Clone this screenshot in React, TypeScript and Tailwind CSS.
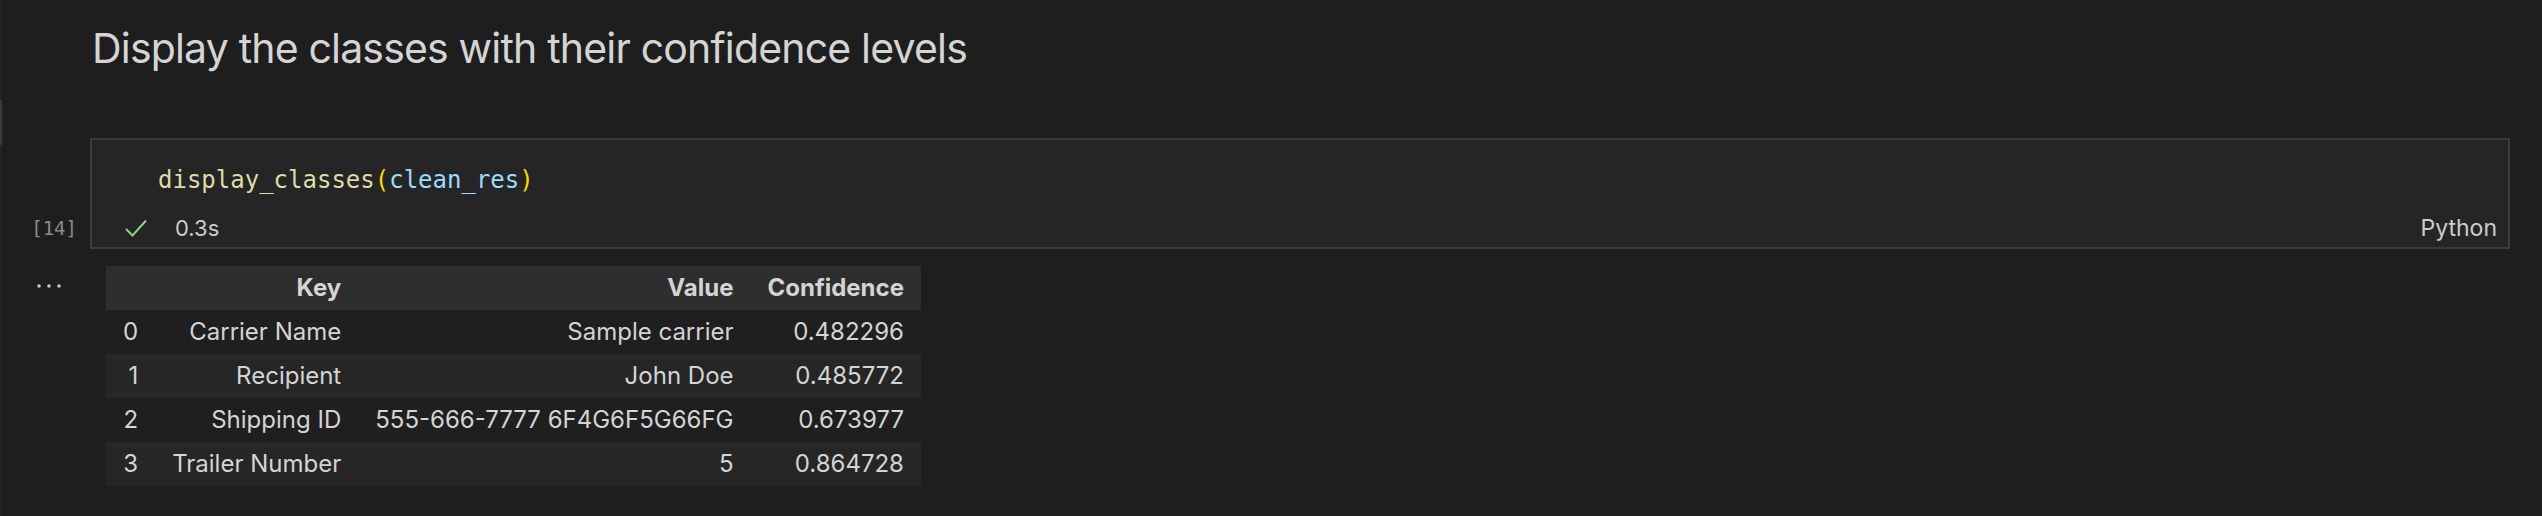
import React from 'react';

interface Row {
  idx: number;
  key: string;
  value: string;
  confidence: string;
}

const rows: Row[] = [
  { idx: 0, key: 'Carrier Name', value: 'Sample carrier', confidence: '0.482296' },
  { idx: 1, key: 'Recipient', value: 'John Doe', confidence: '0.485772' },
  { idx: 2, key: 'Shipping ID', value: '555-666-7777 6F4G6F5G66FG', confidence: '0.673977' },
  { idx: 3, key: 'Trailer Number', value: '5', confidence: '0.864728' },
];

const sans = "font-['Inter','Noto_Sans',sans-serif]";
const mono = "font-['DejaVu_Sans_Mono','Liberation_Mono',monospace]";

function CheckIcon() {
  return (
    <svg width="22" height="18" viewBox="0 0 22 18" fill="none">
      <polyline points="1,10 7.5,16.5 21,1.5" stroke="#89d185" strokeWidth="2" strokeLinejoin="miter" />
    </svg>
  );
}

function MoreIcon() {
  return (
    <svg width="26" height="6" viewBox="0 0 26 6">
      <circle cx="3" cy="3" r="1.8" fill="#c5c5c5" />
      <circle cx="13" cy="3" r="1.8" fill="#c5c5c5" />
      <circle cx="23" cy="3" r="1.8" fill="#c5c5c5" />
    </svg>
  );
}

export default function App() {
  return (
    <div className={`w-[2542px] h-[516px] bg-[#1e1e1e] flex overflow-hidden ${sans}`}>
      {/* left sash */}
      <div className="w-[2px] shrink-0 bg-[#242424] flex flex-col">
        <div className="mt-[100px] h-[45px] bg-[#3a3a3e]"></div>
      </div>

      <div className="flex-1 flex flex-col">
        {/* Markdown cell */}
        <div className="pl-[90px] pt-[23px]">
          <h1 className="text-[41px] leading-[50px] tracking-[-0.02em] text-[#d4d4d4] font-normal">
            Display the classes with their confidence levels
          </h1>
        </div>

        {/* Code cell */}
        <div className="flex mt-[65px]">
          <div className="w-[88px] shrink-0 h-[111px] flex flex-col justify-end pb-[5px]">
            <div className={`h-[32px] flex items-center justify-end pr-[13px] text-[19px] text-[#8b8b8b] ${mono}`}>
              [14]
            </div>
          </div>
          <div className="w-[2420px] h-[111px] border-2 border-[#3b3b40] bg-[#252525] flex flex-col">
            <div className={`pt-[22px] pl-[66px] text-[24px] leading-[36px] ${mono}`}>
              <span className="text-[#dcdcaa]">display_classes</span>
              <span className="text-[#ffd700]">(</span>
              <span className="text-[#9cdcfe]">clean_res</span>
              <span className="text-[#ffd700]">)</span>
            </div>
            <div className="mt-[14px] h-[32px] flex items-center pl-[33px] pr-[11px]">
              <CheckIcon />
              <span className="ml-[28px] text-[22px] text-[#cccccc]">0.3s</span>
              <span className="ml-auto text-[23px] text-[#cccccc]">Python</span>
            </div>
          </div>
        </div>

        {/* Output */}
        <div className="flex mt-[17px]">
          <div className="w-[88px] shrink-0 pl-[34px] pt-[17px]">
            <MoreIcon />
          </div>
          <div className="pl-[16px]">
            <table className="border-collapse text-[24px] text-[#d4d4d4]">
              <thead>
                <tr className="bg-[#2e2e2e] h-[44px]">
                  <th className="px-[17px] text-right font-bold"></th>
                  <th className="px-[17px] text-right font-bold">Key</th>
                  <th className="px-[17px] text-right font-bold">Value</th>
                  <th className="px-[17px] text-right font-bold">Confidence</th>
                </tr>
              </thead>
              <tbody>
                {rows.map((r) => (
                  <tr key={r.idx} className={`h-[44px] ${r.idx % 2 === 1 ? 'bg-[#262626]' : 'bg-[#1f1f1f]'}`}>
                    <td className="px-[17px] text-right">{r.idx}</td>
                    <td className="px-[17px] text-right">{r.key}</td>
                    <td className="px-[17px] text-right">{r.value}</td>
                    <td className="px-[17px] text-right">{r.confidence}</td>
                  </tr>
                ))}
              </tbody>
            </table>
          </div>
        </div>
      </div>
    </div>
  );
}
